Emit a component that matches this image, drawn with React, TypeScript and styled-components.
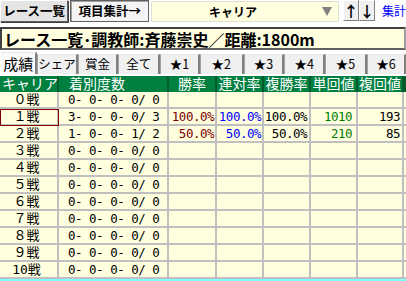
import React from "react";
import styled, { createGlobalStyle } from "styled-components";

const GlobalStyle = createGlobalStyle`
  html, body { margin: 0; padding: 0; background: #ffffff; }
  body { font-family: "Noto Sans CJK JP", "Noto Sans", sans-serif; width: 406px; height: 281px; overflow: hidden; }
`;

const JP = `"Noto Sans CJK JP", sans-serif`;
const COMPACT_JP = `"DejaVu Sans Mono", "Noto Sans CJK JP", sans-serif`;
const MONO = `"DejaVu Sans Mono", "Noto Sans CJK JP", monospace`;
const CREAM = "#ffffe0";
const GRID = "#c0c0c0";

const Page = styled.div`
  display: flex;
  flex-direction: column;
  width: 406px;
`;

const Toolbar = styled.div`
  display: flex;
  align-items: flex-start;
  height: 24px;
  gap: 2px;
`;

const ToolButton = styled.div<{ $w: number; $pressed?: boolean }>`
  box-sizing: border-box;
  width: ${(p) => p.$w}px;
  height: 22px;
  display: flex;
  align-items: center;
  justify-content: center;
  font-family: ${JP};
  font-weight: 700;
  font-size: 12.5px;
  line-height: 1;
  color: #000;
  background: ${(p) => (p.$pressed ? "#f4f4f4" : "#e4e4e4")};
  border: 1px solid #606060;
  border-top-color: ${(p) => (p.$pressed ? "#606060" : "#ffffff")};
  border-left-color: ${(p) => (p.$pressed ? "#606060" : "#ffffff")};
  box-shadow: ${(p) => (p.$pressed ? "inset 1px 1px 0 #a0a0a0" : "1px 1px 0 #404040")};
  white-space: nowrap;
`;

const Select = styled.div`
  box-sizing: border-box;
  width: 190px;
  height: 21px;
  margin-top: 1px;
  display: flex;
  align-items: center;
  background: ${CREAM};
  border: 1px solid #e0e0d0;
`;

const SelectText = styled.span`
  flex: 1;
  text-align: center;
  font-family: ${JP};
  font-weight: 700;
  font-size: 12px;
  line-height: 1;
  color: #000;
  padding-right: 8px;
`;

const Caret = styled.span`
  width: 0;
  height: 0;
  margin-right: 6px;
  border-left: 5px solid transparent;
  border-right: 5px solid transparent;
  border-top: 9px solid #808080;
`;

const ArrowGroup = styled.div`
  display: flex;
  margin-left: 2px;
`;

const ArrowButton = styled.div`
  box-sizing: border-box;
  width: 16px;
  height: 21px;
  display: flex;
  align-items: center;
  justify-content: center;
  font-family: ${JP};
  font-weight: 700;
  font-size: 15px;
  line-height: 1;
  color: #000;
  background: #f0f0f0;
  border: 1px solid #808080;
  border-top-color: #ffffff;
  border-left-color: #ffffff;
`;

const LinkText = styled.span`
  margin-left: 5px;
  margin-top: 5px;
  font-family: ${JP};
  font-size: 12px;
  line-height: 1;
  color: #0000ff;
  white-space: nowrap;
`;

const TitleBox = styled.div`
  box-sizing: border-box;
  margin-top: 3px;
  height: 23px;
  display: flex;
  align-items: center;
  padding-left: 2px;
  background: ${CREAM};
  border: 2px solid #404040;
  border-right-color: #a0a0a0;
  border-bottom-color: #606060;
  font-family: ${JP};
  font-weight: 700;
  font-size: 16px;
  line-height: 1;
  color: #000;
  white-space: nowrap;
  overflow: hidden;
`;

const TabRow = styled.div`
  display: flex;
  align-items: flex-end;
  height: 24px;
  border-bottom: 1px solid #ffffff;
`;

const Tab = styled.div<{ $w: number; $active?: boolean }>`
  box-sizing: border-box;
  width: ${(p) => p.$w}px;
  height: ${(p) => (p.$active ? 22 : 20)}px;
  display: flex;
  align-items: center;
  justify-content: center;
  font-family: ${JP};
  font-size: ${(p) => (p.$active ? 15 : 12.5)}px;
  line-height: 1;
  color: #000;
  background: ${(p) => (p.$active ? "#fafafa" : "#f0f0f0")};
  border-left: 1px solid ${(p) => (p.$active ? "#ffffff" : "#a0a0a0")};
  border-right: 2px solid #808080;
  border-top: 1px solid #e8e8e8;
  white-space: nowrap;
`;

const Table = styled.div`
  display: grid;
  grid-template-columns: 59px 110px 48px 47px 47px 47px 46px 2px;
  margin-top: 1px;
  border-bottom: 2px solid #80ffff;
  background: ${CREAM};
`;

const HeadCell = styled.div<{ $align?: string; $pad?: number }>`
  box-sizing: border-box;
  height: 16px;
  display: flex;
  align-items: center;
  justify-content: ${(p) => p.$align ?? "center"};
  padding-left: ${(p) => p.$pad ?? 0}px;
  background: #008040;
  border-right: 2px solid #005c2c;
  font-family: ${COMPACT_JP};
  font-size: 14px;
  line-height: 16px;
  color: #ffffff;
  white-space: nowrap;
`;

const Cell = styled.div<{ $align?: string; $pr?: number; $pl?: number; $color?: string; $sel?: boolean }>`
  box-sizing: border-box;
  height: 17px;
  display: flex;
  align-items: center;
  justify-content: ${(p) => p.$align ?? "flex-end"};
  padding-right: ${(p) => p.$pr ?? 0}px;
  padding-left: ${(p) => p.$pl ?? 0}px;
  border-right: 2px solid ${GRID};
  border-bottom: 2px solid ${GRID};
  font-family: ${MONO};
  font-size: 12.5px;
  line-height: 15px;
  letter-spacing: -0.5px;
  color: ${(p) => p.$color ?? "#000"};
  white-space: pre;
  outline: ${(p) => (p.$sel ? "1px solid #800000" : "none")};
  outline-offset: -1px;
`;

const LabelCell = styled(Cell)`
  font-family: ${COMPACT_JP};
  font-size: 13px;
  letter-spacing: 0;
  padding-right: 4px;
`;

const Edge = styled.div`
  height: 17px;
  border-bottom: 2px solid ${GRID};
  box-sizing: border-box;
`;

const HeadEdge = styled.div`
  height: 16px;
  background: #005c2c;
`;

type Row = {
  label: string;
  counts: string;
  win?: string;
  ren?: string;
  fuku?: string;
  tan?: string;
  fukuKai?: string;
};

const rows: Row[] = [
  { label: "０戦", counts: "0- 0- 0- 0/ 0" },
  { label: "１戦", counts: "3- 0- 0- 0/ 3", win: "100.0%", ren: "100.0%", fuku: "100.0%", tan: "1010", fukuKai: "193" },
  { label: "２戦", counts: "1- 0- 0- 1/ 2", win: "50.0%", ren: "50.0%", fuku: "50.0%", tan: "210", fukuKai: "85" },
  { label: "３戦", counts: "0- 0- 0- 0/ 0" },
  { label: "４戦", counts: "0- 0- 0- 0/ 0" },
  { label: "５戦", counts: "0- 0- 0- 0/ 0" },
  { label: "６戦", counts: "0- 0- 0- 0/ 0" },
  { label: "７戦", counts: "0- 0- 0- 0/ 0" },
  { label: "８戦", counts: "0- 0- 0- 0/ 0" },
  { label: "９戦", counts: "0- 0- 0- 0/ 0" },
  { label: "10戦", counts: "0- 0- 0- 0/ 0" },
];

const tabs: { label: string; w: number }[] = [
  { label: "成績", w: 38 },
  { label: "シェア", w: 41 },
  { label: "賞金", w: 41 },
  { label: "全て", w: 43 },
  { label: "★1", w: 40 },
  { label: "★2", w: 45 },
  { label: "★3", w: 41 },
  { label: "★4", w: 42 },
  { label: "★5", w: 42 },
  { label: "★6", w: 40 },
];

export default function App() {
  return (
    <Page>
      <GlobalStyle />
      <Toolbar>
        <ToolButton $w={69}>レース一覧</ToolButton>
        <ToolButton $w={80} $pressed>項目集計→</ToolButton>
        <Select>
          <SelectText>キャリア</SelectText>
          <Caret />
        </Select>
        <ArrowGroup>
          <ArrowButton>↑</ArrowButton>
          <ArrowButton>↓</ArrowButton>
        </ArrowGroup>
        <LinkText>集計</LinkText>
      </Toolbar>
      <TitleBox>レース一覧･調教師:斉藤崇史／距離:1800m</TitleBox>
      <TabRow>
        {tabs.map((t, i) => (
          <Tab key={t.label} $w={t.w} $active={i === 0}>
            {t.label}
          </Tab>
        ))}
      </TabRow>
      <Table>
        <HeadCell $align="flex-start" $pad={2}>キャリア</HeadCell>
        <HeadCell $align="flex-start" $pad={10}>着別度数</HeadCell>
        <HeadCell>勝率</HeadCell>
        <HeadCell>連対率</HeadCell>
        <HeadCell>複勝率</HeadCell>
        <HeadCell>単回値</HeadCell>
        <HeadCell>複回値</HeadCell>
        <HeadEdge />
        {rows.map((r, i) => (
          <React.Fragment key={r.label}>
            <LabelCell $align="center" $sel={i === 1}>{r.label}</LabelCell>
            <Cell $align="flex-start" $pl={9}>{r.counts}</Cell>
            <Cell $pr={1} $color="#800000">{r.win ?? ""}</Cell>
            <Cell $pr={1} $color="#0000ff">{r.ren ?? ""}</Cell>
            <Cell $pr={2}>{r.fuku ?? ""}</Cell>
            <Cell $pr={4} $color="#008000">{r.tan ?? ""}</Cell>
            <Cell $pr={2}>{r.fukuKai ?? ""}</Cell>
            <Edge />
          </React.Fragment>
        ))}
      </Table>
    </Page>
  );
}
